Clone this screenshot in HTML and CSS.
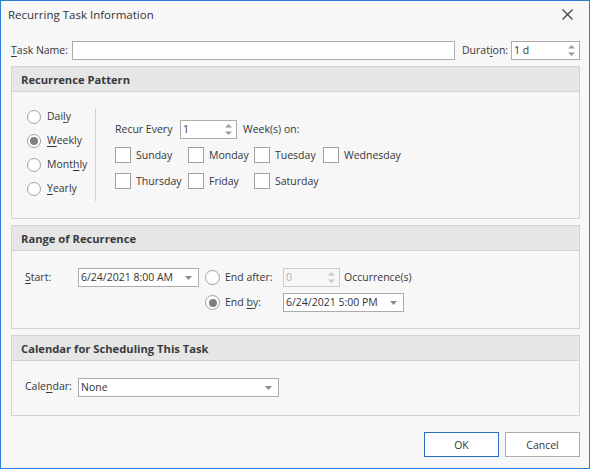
FILE: index.html
```html
<!DOCTYPE html>
<html>
<head>
<meta charset="utf-8">
<link rel="stylesheet" href="styles.css">
</head>
<body>
<div class="dialog">
  <div class="titlebar">
    <span class="title">Recurring Task Information</span>
    <svg class="close" width="11" height="11" viewBox="0 0 11 11"><path d="M0.5 0.5 L10.5 10.5 M10.5 0.5 L0.5 10.5" stroke="#444" stroke-width="1.3" fill="none"/></svg>
  </div>
  <div class="content">
    <div class="taskrow">
      <span class="lbl-task"><u>T</u>ask Name:</span>
      <div class="input task-input"></div>
      <span class="lbl-dur">Durat<u>i</u>on:</span>
      <div class="input spin dur-input"><span class="val">1 d</span>
        <span class="spinbtn"><svg width="7" height="13" viewBox="0 0 7 13"><path d="M3.5 1 L7 4.5 L0 4.5 Z M0 8.5 L7 8.5 L3.5 12 Z" fill="#9a9a9a"/></svg></span>
      </div>
    </div>

    <div class="section s1">
      <div class="sec-head">Recurrence Pattern</div>
      <div class="sec-body pattern">
        <div class="radios">
          <div class="radio-row"><span class="radio"></span><span>Dai<u>l</u>y</span></div>
          <div class="radio-row"><span class="radio checked"></span><span><u>W</u>eekly</span></div>
          <div class="radio-row"><span class="radio"></span><span>Mont<u>h</u>ly</span></div>
          <div class="radio-row"><span class="radio"></span><span><u>Y</u>early</span></div>
        </div>
        <div class="weekly">
          <div class="recur-row">
            <span class="lbl-recur">Recur Every</span>
            <div class="input spin small-spin"><span class="val">1</span>
              <span class="spinbtn"><svg width="7" height="13" viewBox="0 0 7 13"><path d="M3.5 1 L7 4.5 L0 4.5 Z M0 8.5 L7 8.5 L3.5 12 Z" fill="#9a9a9a"/></svg></span>
            </div>
            <span class="lbl-weeks">Week(s) on:</span>
          </div>
          <div class="days">
            <div class="day"><span class="check"></span><span>Sunday</span></div>
            <div class="day"><span class="check"></span><span>Monday</span></div>
            <div class="day"><span class="check"></span><span>Tuesday</span></div>
            <div class="day"><span class="check"></span><span>Wednesday</span></div>
            <div class="day"><span class="check"></span><span>Thursday</span></div>
            <div class="day"><span class="check"></span><span>Friday</span></div>
            <div class="day"><span class="check"></span><span>Saturday</span></div>
          </div>
        </div>
      </div>
    </div>

    <div class="section s2">
      <div class="sec-head">Range of Recurrence</div>
      <div class="sec-body range">
        <span class="lbl-start"><u>S</u>tart:</span>
        <div class="input combo"><span class="val">6/24/2021 8:00 AM</span>
          <svg class="arrow" width="7" height="4" viewBox="0 0 7 4"><path d="M0 0 L7 0 L3.5 4 Z" fill="#8a8a8a"/></svg>
        </div>
        <div class="opt"><span class="radio"></span><span>End after:</span></div>
        <div class="occ">
          <div class="input spin small-spin disabled"><span class="val">0</span>
            <span class="spinbtn"><svg width="7" height="13" viewBox="0 0 7 13"><path d="M3.5 1 L7 4.5 L0 4.5 Z M0 8.5 L7 8.5 L3.5 12 Z" fill="#c8c8c8"/></svg></span>
          </div>
          <span class="lbl-occ">Occurrence(s)</span>
        </div>
        <span></span>
        <span></span>
        <div class="opt"><span class="radio checked"></span><span>End <u>b</u>y:</span></div>
        <div class="occ">
          <div class="input combo"><span class="val">6/24/2021 5:00 PM</span>
            <svg class="arrow" width="7" height="4" viewBox="0 0 7 4"><path d="M0 0 L7 0 L3.5 4 Z" fill="#8a8a8a"/></svg>
          </div>
        </div>
      </div>
    </div>

    <div class="section s3">
      <div class="sec-head">Calendar for Scheduling This Task</div>
      <div class="sec-body cal">
        <span class="lbl-start">Cale<u>n</u>dar:</span>
        <div class="input combo wide"><span class="val">None</span>
          <svg class="arrow" width="7" height="4" viewBox="0 0 7 4"><path d="M0 0 L7 0 L3.5 4 Z" fill="#8a8a8a"/></svg>
        </div>
      </div>
    </div>

    <div class="buttons">
      <div class="btn btn-ok">OK</div>
      <div class="btn">Cancel</div>
    </div>
  </div>
</div>
</body>
</html>
```
FILE: styles.css
```css
html, body {
  margin: 0;
  padding: 0;
}
body {
  font-family: "Open Sans", "Noto Sans", "Liberation Sans", sans-serif;
  font-size: 10.5px;
  color: #363636;
  background: #f7f7f7;
}
u {
  text-decoration: underline;
  text-underline-offset: 2px;
}
.dialog {
  width: 590px;
  height: 469px;
  box-sizing: border-box;
  border: 1px solid #2b7cd3;
  background: #f7f7f7;
  display: flex;
  flex-direction: column;
}
.titlebar {
  height: 29px;
  display: flex;
  align-items: center;
  justify-content: space-between;
  padding: 0 16px 0 7px;
  flex: none;
}
.title {
  font-size: 11.5px;
  color: #333;
  margin-top: -2px;
}
.close {
  margin-top: -2px;
}
.content {
  padding: 0 9px 0 10px;
  display: flex;
  flex-direction: column;
}
.taskrow {
  display: flex;
  align-items: center;
  margin-top: 11px;
  height: 19px;
}
.taskrow > span {
  margin-top: -1px;
}
.lbl-task {
  width: 61px;
  flex: none;
}
.input {
  height: 19px;
  box-sizing: border-box;
  border: 1px solid #ababab;
  background: #fff;
  display: flex;
  align-items: center;
  position: relative;
}
.val {
  padding-left: 2px;
  color: #333;
  margin-top: -1px;
}
.task-input {
  flex: 1;
}
.lbl-dur {
  margin-left: 7px;
  width: 49px;
  flex: none;
}
.dur-input {
  width: 69px;
  flex: none;
}
.spinbtn {
  position: absolute;
  right: 4px;
  top: 2px;
  display: flex;
}
.section {
  border: 1px solid #d3d3d3;
  margin-top: 6px;
}
.sec-head {
  height: 24px;
  background: #e6e6e6;
  border-bottom: 1px solid #d3d3d3;
  font-weight: bold;
  font-size: 11.2px;
  color: #3a3a3a;
  display: flex;
  align-items: center;
  padding-left: 9px;
}
.pattern {
  height: 126px;
  box-sizing: border-box;
  padding: 17px 0 0 15px;
  display: flex;
  align-items: flex-start;
}
.radios {
  width: 69px;
  height: 92px;
  border-right: 1px solid #cfcfcf;
  padding-top: 1px;
  box-sizing: border-box;
}
.radio-row {
  height: 24px;
  display: flex;
  align-items: flex-start;
  gap: 6px;
}
.radio-row span:last-child {
  margin-top: -1px;
}
.radio {
  width: 14px;
  height: 14px;
  box-sizing: border-box;
  border: 1px solid #a0a0a0;
  border-radius: 50%;
  background: #fff;
  display: flex;
  align-items: center;
  justify-content: center;
  flex: none;
}
.radio.checked::after {
  content: "";
  width: 8px;
  height: 8px;
  border-radius: 50%;
  background: #808080;
}
.weekly {
  margin: 11px 0 0 19px;
}
.recur-row {
  display: flex;
  align-items: center;
  height: 19px;
}
.recur-row > span {
  margin-top: -1px;
}
.lbl-recur {
  width: 65px;
}
.small-spin {
  width: 57px;
  flex: none;
}
.lbl-weeks {
  margin-left: 6px;
}
.days {
  margin-top: 8px;
  display: grid;
  grid-template-columns: 73px 66px 69px auto;
  row-gap: 10px;
}
.day {
  display: flex;
  align-items: center;
  gap: 5px;
  height: 16px;
}
.day span:last-child {
  margin-top: -1px;
}
.check {
  width: 16px;
  height: 16px;
  box-sizing: border-box;
  border: 1px solid #a0a0a0;
  background: #fff;
  flex: none;
}
.range {
  height: 77px;
  box-sizing: border-box;
  padding: 17px 0 0 13px;
  display: grid;
  grid-template-columns: 53px 121px 84px auto;
  grid-template-rows: 19px 19px;
  row-gap: 6px;
  align-items: center;
}
.range > span, .opt span:last-child {
  margin-top: -1px;
}
.combo {
  width: 121px;
}
.combo .arrow {
  position: absolute;
  right: 6px;
  top: 7px;
}
.opt {
  display: flex;
  align-items: center;
  padding-left: 6px;
  gap: 5px;
}
.opt .radio {
  width: 15px;
  height: 15px;
}
.occ {
  display: flex;
  align-items: center;
}
.disabled {
  border-color: #cdcdcd;
  background: #f7f7f7;
}
.disabled .val {
  color: #b0b0b0;
}
.lbl-occ {
  margin-left: 4px;
  margin-top: -1px;
}
.cal {
  height: 54px;
  box-sizing: border-box;
  padding: 17px 0 0 13px;
  display: flex;
  align-items: flex-start;
}
.cal .lbl-start {
  width: 53px;
  line-height: 19px;
  margin-top: -1px;
}
.wide {
  width: 201px;
}
.buttons {
  display: flex;
  justify-content: flex-end;
  gap: 6px;
  margin-top: 16px;
}
.btn {
  width: 75px;
  height: 25px;
  box-sizing: border-box;
  border: 1px solid #adadad;
  background: #fff;
  display: flex;
  align-items: center;
  justify-content: center;
  color: #333;
}
.btn-ok {
  border-color: #2a6ebd;
}
```
